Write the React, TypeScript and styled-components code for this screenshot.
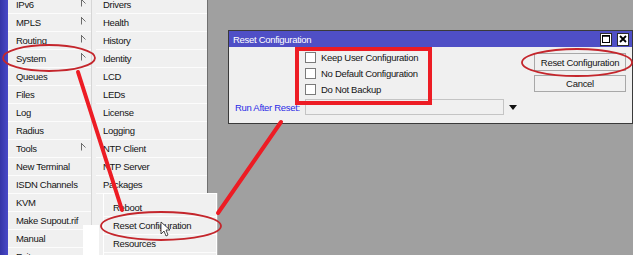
import styled, { createGlobalStyle } from "styled-components";

const GlobalStyle = createGlobalStyle`
    html, body {
        margin: 0;
        padding: 0;
        background: #a0a0a0;
    }
`

const Screen = styled.div`
    position: relative;
    width: 633px;
    height: 255px;
    overflow: hidden;
    background: #a0a0a0;
    display: flex;
    align-items: flex-start;
    font-family: "Liberation Sans", Arial, sans-serif;
    font-size: 9.5px;
    letter-spacing: -0.3px;
    color: #141414;
`

const BlueStrip = styled.div`
    width: 8px;
    height: 100%;
    background: linear-gradient(to right, #3434a6, #4848c8);
`

const MenuColumn = styled.div<{ W: number; Edge: string; PadLeft: number }>`
    width: ${props => props.W}px;
    height: calc(100% + 4px);
    margin-top: -4px;
    padding-left: ${props => props.PadLeft}px;
    background: #f0f0f0;
    border-right: 1px solid ${props => props.Edge};
    display: flex;
    flex-direction: column;
`

const MenuRow = styled.div<{ Indent: number }>`
    height: 17px;
    flex-shrink: 0;
    display: flex;
    align-items: center;
    justify-content: space-between;
    padding-left: ${props => props.Indent}px;
    padding-right: 5px;
    border-bottom: 1px solid #fcfcfc;
    background: #f0f0f0;
`

const Arrow = () => (
    <svg width="5" height="8" viewBox="0 0 5 8" style={{ alignSelf: "flex-start", marginTop: 3 }}>
        <polyline points="0.5,0 0.5,7.5" stroke="#6c6c6c" strokeWidth="1" fill="none" />
        <polyline points="0.5,0.5 4.5,4.5" stroke="#6c6c6c" strokeWidth="1" fill="none" />
    </svg>
)

const Submenu = styled.div`
    position: absolute;
    left: 103px;
    top: 193px;
    width: 112px;
    height: 70px;
    padding-top: 5px;
    background: #f0f0f0;
    border: 1px solid #ffffff;
    box-shadow: 1px 0 0 #b4b4b4;
    display: flex;
    flex-direction: column;
`

const WhiteBlock = styled.div`
    position: absolute;
    left: 83px;
    top: 225px;
    width: 16px;
    height: 30px;
    background: #ffffff;
`

const Dialog = styled.div`
    position: absolute;
    left: 228px;
    top: 30px;
    width: 403px;
    border: 1px solid #3a3a3a;
    background: #f0f0f0;
    display: flex;
    flex-direction: column;
`

const TitleBar = styled.div`
    height: 16px;
    background: #4f4fc6;
    color: #ffffff;
    display: flex;
    align-items: center;
    justify-content: space-between;
    padding: 0 3px 0 4px;
`

const TitleButtons = styled.div`
    display: flex;
    gap: 5px;
`

const TitleButton = styled.div`
    width: 10px;
    height: 11px;
    background: #ffffff;
    border: 1px solid #2a2a2a;
    display: flex;
    align-items: center;
    justify-content: center;
`

const Body = styled.div`
    display: flex;
    justify-content: space-between;
    padding: 2px 6px 8px 6px;
`

const LeftPart = styled.div`
    display: flex;
    flex-direction: column;
`

const CheckList = styled.div`
    margin-left: 70px;
    display: flex;
    flex-direction: column;
`

const CheckRow = styled.div`
    height: 16px;
    display: flex;
    align-items: center;
    gap: 5px;
`

const Box = styled.div`
    width: 9px;
    height: 9px;
    background: #ffffff;
    border: 1px solid #7a7a7a;
`

const FieldRow = styled.div`
    height: 16px;
    margin-top: 2px;
    display: flex;
    align-items: center;
`

const FieldLabel = styled.div`
    width: 70px;
    color: #2a2ae6;
`

const Field = styled.div`
    width: 197px;
    height: 14px;
    border: 1px solid #c4c4c4;
    background: #f0f0f0;
`

const ButtonColumn = styled.div`
    margin-top: 4px;
    display: flex;
    flex-direction: column;
    gap: 4px;
`

const Button = styled.div<{ H: number }>`
    width: 90px;
    height: ${props => props.H}px;
    border: 1px solid #a8a8a8;
    background: #f0f0f0;
    display: flex;
    align-items: center;
    justify-content: center;
`

const Overlay = styled.svg`
    position: absolute;
    left: 0;
    top: 0;
    pointer-events: none;
`

const firstMenu: [string, boolean][] = [
    ["IPv6", true], ["MPLS", true], ["Routing", true], ["System", true],
    ["Queues", false], ["Files", false], ["Log", false], ["Radius", false],
    ["Tools", true], ["New Terminal", false], ["ISDN Channels", false], ["KVM", false],
    ["Make Supout.rif", false], ["Manual", false], ["Exit", false],
]

// rows below Packages are covered by the submenu
const systemMenu = [
    "Drivers", "Health", "History", "Identity", "LCD", "LEDs", "License",
    "Logging", "NTP Client", "NTP Server", "Packages",
]

const subItems = ["Reboot", "Reset Configuration", "Resources"]

const checks = ["Keep User Configuration", "No Default Configuration", "Do Not Backup"]

export default function App() {
    return (
        <>
            <GlobalStyle />
            <Screen>
                <BlueStrip />
                <MenuColumn W={83} Edge="#d6d6d6" PadLeft={0}>
                    {firstMenu.map(([name, sub]) => (
                        <MenuRow key={name} Indent={8}>
                            <span>{name}</span>
                            {sub && <Arrow />}
                        </MenuRow>
                    ))}
                </MenuColumn>
                <MenuColumn W={111} Edge="#707070" PadLeft={4}>
                    {systemMenu.map(name => (
                        <MenuRow key={name} Indent={7}>
                            <span>{name}</span>
                        </MenuRow>
                    ))}
                </MenuColumn>

                <WhiteBlock />

                <Submenu>
                    {subItems.map(name => (
                        <MenuRow key={name} Indent={9}>
                            <span>{name}</span>
                        </MenuRow>
                    ))}
                </Submenu>

                <Dialog>
                    <TitleBar>
                        <span>Reset Configuration</span>
                        <TitleButtons>
                            <TitleButton>
                                <svg width="8" height="8" viewBox="0 0 8 8">
                                    <rect x="0.5" y="0.5" width="7" height="7" fill="none" stroke="#000" strokeWidth="1" />
                                    <line x1="0" y1="1" x2="8" y2="1" stroke="#000" strokeWidth="1.5" />
                                </svg>
                            </TitleButton>
                            <TitleButton>
                                <svg width="8" height="8" viewBox="0 0 8 8">
                                    <path d="M1 1 L7 7 M7 1 L1 7" stroke="#000" strokeWidth="1.8" />
                                </svg>
                            </TitleButton>
                        </TitleButtons>
                    </TitleBar>
                    <Body>
                        <LeftPart>
                            <CheckList>
                                {checks.map(c => (
                                    <CheckRow key={c}>
                                        <Box />
                                        <span>{c}</span>
                                    </CheckRow>
                                ))}
                            </CheckList>
                            <FieldRow>
                                <FieldLabel>Run After Reset:</FieldLabel>
                                <Field />
                                <svg width="8" height="5" viewBox="0 0 8 5" style={{ marginLeft: 5 }}>
                                    <polygon points="0,0 8,0 4,5" fill="#111" />
                                </svg>
                            </FieldRow>
                        </LeftPart>
                        <ButtonColumn>
                            <Button H={16}>Reset Configuration</Button>
                            <Button H={15}>Cancel</Button>
                        </ButtonColumn>
                    </Body>
                </Dialog>

                <Overlay width="633" height="255" viewBox="0 0 633 255">
                    <rect x="297" y="49" width="133" height="54" fill="none" stroke="#ed1c24" strokeWidth="4" />
                    <line x1="78" y1="72" x2="122" y2="210" stroke="#ed1c24" strokeWidth="4" strokeLinecap="round" />
                    <line x1="281" y1="122" x2="218" y2="213" stroke="#ed1c24" strokeWidth="4" strokeLinecap="round" />
                    <ellipse cx="49" cy="58" rx="46" ry="13" fill="none" stroke="#c4262c" strokeWidth="1.8" />
                    <ellipse cx="577" cy="62.5" rx="55" ry="13.5" fill="none" stroke="#c4262c" strokeWidth="1.8" />
                    <ellipse cx="161" cy="226" rx="60" ry="14" fill="none" stroke="#c4262c" strokeWidth="1.8" />
                    <path d="M161 222 L161 234 L164 231 L166 236 L168 235 L166 230 L170 230 Z" fill="#ffffff" stroke="#222" strokeWidth="0.8" />
                </Overlay>
            </Screen>
        </>
    )
}
